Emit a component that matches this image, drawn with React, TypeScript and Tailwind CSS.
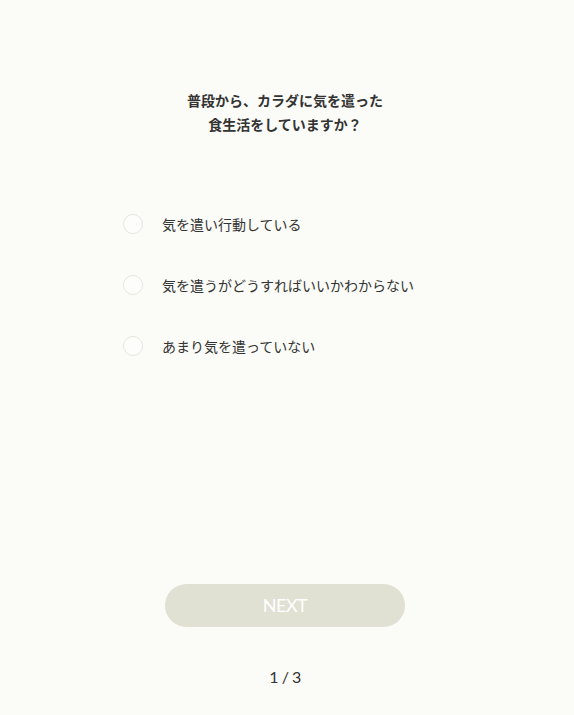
import { useState } from "react";

const options = [
  "気を遣い行動している",
  "気を遣うがどうすればいいかわからない",
  "あまり気を遣っていない",
];

export default function App() {
  const [selected, setSelected] = useState<number | null>(null);

  return (
    <div className="min-h-[715px] bg-[#fbfbf7] font-['Noto_Sans_CJK_JP',sans-serif] text-[#333333]">
      <div className="flex w-[570px] flex-col items-center">
        <h1 className="mt-[88px] text-center text-[14px] font-bold leading-[24px]">
          普段から、カラダに気を遣った
          <br />
          食生活をしていますか？
        </h1>

        <ul className="mt-[78px] flex w-full flex-col gap-[41px] pl-[123px]">
          {options.map((label, i) => (
            <li key={label}>
              <button
                type="button"
                onClick={() => setSelected(i)}
                className="flex h-[20px] items-center gap-[19px] text-left"
              >
                <span className="flex h-[20px] w-[20px] items-center justify-center rounded-full border border-[#e6e6de] bg-[#fdfdfb]">
                  {selected === i ? (
                    <span className="h-[10px] w-[10px] rounded-full bg-[#b9b9a6]" />
                  ) : null}
                </span>
                <span className="text-[14px] leading-[20px]">{label}</span>
              </button>
            </li>
          ))}
        </ul>

        <button
          type="button"
          disabled={selected === null}
          className="mt-[228px] h-[43px] w-[240px] rounded-full bg-[#e0e0d3] font-['Lato',sans-serif] text-[18px] font-normal tracking-[-0.5px] text-white"
        >
          NEXT
        </button>

        <p className="mt-[40px] font-['Lato',sans-serif] text-[16px] leading-[20px] tracking-[-0.5px]">
          1 / 3
        </p>
      </div>
    </div>
  );
}
